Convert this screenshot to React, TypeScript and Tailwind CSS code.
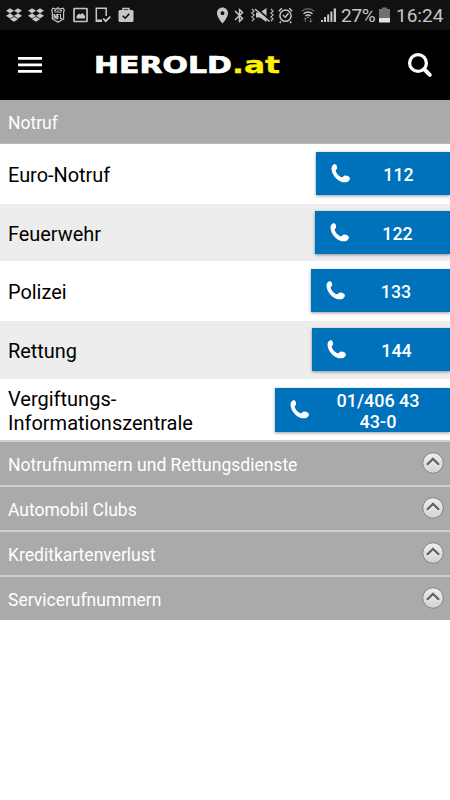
import { FaDropbox } from "react-icons/fa";
import { MdBluetooth, MdPlace } from "react-icons/md";

const numbers = [
  { label: "Euro-Notruf", phone: "112", row: "h-[60px] bg-white pb-px", button: "w-[134px]", text: "w-[65px]" },
  { label: "Feuerwehr", phone: "122", row: "h-[57px] bg-[#ededed]", button: "w-[135px]", text: "w-[65px]" },
  { label: "Polizei", phone: "133", row: "h-[60px] bg-white pb-px", button: "w-[139px]", text: "w-[70px]" },
  { label: "Rettung", phone: "144", row: "h-[58px] bg-[#ededed] pb-px", button: "w-[138px]", text: "w-[69px]" },
];

const sections = [
  "Notrufnummern und Rettungsdienste",
  "Automobil Clubs",
  "Kreditkartenverlust",
  "Servicerufnummern",
];

function StatusBar() {
  return (
    <div className="flex h-[30px] items-center justify-between bg-[#111] pl-[6px] pr-[6px] text-[#c6c6c6]">
      <div className="flex items-center">
        <FaDropbox className="h-4 w-4" />
        <FaDropbox className="ml-[6px] h-4 w-4" />
        {/* NFL */}
        <svg className="ml-[7px]" width="14" height="16" viewBox="0 0 14 16">
          <path d="M7 .7 9 2l3-.8L13.3 3l-.7 2v7L9 14l-2 1.3L5 14l-3.600-2V5L.7 3 2 1.200 5 2Z" fill="none" stroke="currentColor" strokeWidth="1.200" />
          <path d="M3 3.500h2M6 3h2M9 3.500h2M3.500 5h7" stroke="currentColor" />
          <path d="M3 12V7l2.200 5V7M6.500 12.500V7.500h1.800M6.500 10h1.500M9.500 7v4.500h1.800" fill="none" stroke="currentColor" strokeWidth="1.100" />
        </svg>
        {/* picture */}
        <svg className="ml-[8px]" width="15" height="16" viewBox="0 0 15 16">
          <rect x="1" y="1.500" width="13" height="13" rx="0.500" fill="none" stroke="currentColor" strokeWidth="1.700" />
          <path d="M3.500 11.500V9L6 6.500l1.500 1L9.500 6l2.500 3v2.500Z" fill="currentColor" />
        </svg>
        {/* device check */}
        <svg className="ml-[7px]" width="16" height="16" viewBox="0 0 16 16" fill="none" stroke="currentColor">
          <path d="M7 14.200H1.300V1.300h9.900V9" strokeWidth="1.500" />
          <path d="M1 13.500h6" strokeWidth="2" />
          <path d="m8.200 11.500 2.500 2.700 4.600-4.600" strokeWidth="1.800" />
        </svg>
        {/* work profile */}
        <svg className="ml-[7px]" width="16" height="16" viewBox="0 0 16 16">
          <path d="M5 4V1.500h6V4" fill="none" stroke="currentColor" strokeWidth="1.500" />
          <rect x=".5" y="3" width="15" height="12" rx="1.500" fill="currentColor" />
          <path d="m4.700 8.700 2.500 2.500 4-4.300" fill="none" stroke="#111" strokeWidth="1.600" />
        </svg>
      </div>

      <div className="flex items-center">
        <MdPlace className="h-[19px] w-[19px]" />
        <MdBluetooth className="-ml-[1px] h-[17px] w-[17px]" />
        {/* vibrate / muted */}
        <svg className="ml-[3px]" width="23" height="16" viewBox="0 0 23 16">
          <path d="M5 5.500h4l6.500-4.500v14L9 10.500H5Z" fill="currentColor" />
          <path d="m5 .5 15 14" stroke="#111" strokeWidth="1.800" />
          <path d="m4 2 14.500 12.500" stroke="currentColor" strokeWidth="1.300" />
          <path d="M1 2l2 2-2 2 2 2-2 2 2 2-2 2M20 2l2 2-2 2 2 2-2 2 2 2-2 2" fill="none" stroke="currentColor" strokeWidth="1.300" strokeDasharray="2 .5" />
        </svg>
        {/* alarm */}
        <svg className="ml-[4px]" width="15" height="17" viewBox="0 0 15 17" fill="none" stroke="currentColor">
          <circle cx="7.500" cy="8.700" r="5.600" strokeWidth="1.500" />
          <path d="m.8 4.200 3-2.900M14.200 4.200l-3-2.900M2.800 14.500l-1 1.500M12.200 14.500l1 1.500" strokeWidth="1.500" />
          <path d="m5 8 2.300 2.200 3.200-4" strokeWidth="1.400" />
        </svg>
        {/* wifi */}
        <svg className="ml-[8px] mr-[2px]" width="14" height="16" viewBox="0 0 14 16" fill="none" stroke="currentColor">
          <path d="M.7 4.200c3.500-3.300 9.100-3.300 12.600 0" strokeWidth="1.300" opacity=".45" />
          <path d="M2.500 6.700c2.500-2.400 6.500-2.400 9 0M4.500 9c1.300-1.400 3.700-1.400 5 0" strokeWidth="1.500" />
          <circle cx="7" cy="10.300" r=".8" fill="currentColor" stroke="none" />
          <path d="M4.300 15v-4M2.800 12.500l1.500-1.700 1.500 1.700M9.700 11v4M8.200 13.500l1.500 1.700 1.500-1.700" strokeWidth="1" opacity=".5" />
        </svg>
        {/* signal */}
        <svg className="ml-[4px]" width="16" height="16" viewBox="0 0 16 16" fill="currentColor">
          <path d="M0 15v-2h2v2ZM3 15v-5h2v5ZM6.200 15V7.500h2V15ZM9.400 15V4.500h2V15ZM12.700 15V1.500h2.300V15Z" />
        </svg>
        <span className="ml-[4px] w-[36px] pt-[2px] text-[19px] leading-[28px] tracking-[-0.3px]">27%</span>
        {/* battery */}
        <svg className="ml-[2px] mr-px" width="11" height="16" viewBox="0 0 11 16">
          <path d="M3 2V.5h5V2h3v9H0V2Z" fill="#707070" />
          <path d="M0 11h11v4.500H0Z" fill="#e2e2e2" />
        </svg>
        <span className="ml-[5px] w-[48px] pt-[2px] text-[19px] leading-[28px]">16:24</span>
      </div>
    </div>
  );
}

function Header() {
  return (
    <header className="flex h-[70px] items-center bg-black pl-[18px] pr-[17px]">
      <svg width="24" height="18" viewBox="0 0 24 18" fill="#fff">
        <path d="M0 1h24v2.700H0ZM0 7.500h24v2.700H0ZM0 14h24v2.700H0Z" />
      </svg>
      <svg className="ml-[52px]" width="190" height="30" viewBox="0 0 190 30" fontFamily="DejaVu Sans, sans-serif" fontWeight="bold">
        <text x="0" y="23" fontSize="23" fill="#fff" stroke="#fff" strokeWidth=".7" textLength="138" lengthAdjust="spacingAndGlyphs">HEROLD</text>
        <text x="138" y="23" fontSize="22.500" fill="#fff200" stroke="#fff200" strokeWidth=".3" textLength="48" lengthAdjust="spacingAndGlyphs">.at</text>
      </svg>
      <svg className="ml-auto" width="26" height="26" viewBox="0 0 26 26" fill="none" stroke="#fff">
        <circle cx="11" cy="11" r="8.400" strokeWidth="3.300" />
        <path d="m17.500 17.500 5.300 5.300" strokeWidth="4" strokeLinecap="round" />
      </svg>
    </header>
  );
}

function PhoneIcon() {
  return (
    <svg className="ml-[15px] shrink-0" width="19" height="19" viewBox="0 0 19 19" fill="#fff">
      <path d="M1.300 1.800C2.300.3 4-.2 5 .7c1 1 1.400 2.600 1 3.700C5.700 5.500 4.500 5.700 4.700 6.700c.5 2.600 3.200 5.800 6.200 6.600 1.200.3 1.400-1.300 2.800-1.700 1.800-.4 4 .5 4.900 1.800.8 1.300 0 3-1.500 4-3 1.900-7.600.8-11.400-2.500C1.900 11.500-.9 5.200 1.300 1.800Z" />
    </svg>
  );
}

function ArrowUp() {
  return (
    <svg width="22" height="22" viewBox="0 0 22 22">
      <defs>
        <linearGradient id="knob" x1="0" y1="0" x2="0" y2="1">
          <stop offset="0" stopColor="#eee" />
          <stop offset="1" stopColor="#d2d2d2" />
        </linearGradient>
      </defs>
      <circle cx="11" cy="11" r="10.300" fill="url(#knob)" stroke="#858585" strokeWidth="1" />
      <path d="m5.300 14.100 5.700-5.700 5.700 5.700" fill="none" stroke="#fff" strokeWidth="2" />
      <path d="m5 12.900 6-6 6 6" fill="none" stroke="#666" strokeWidth="2.400" />
    </svg>
  );
}

export default function App() {
  return (
    <div className="h-[800px] w-[450px] overflow-hidden bg-white font-[Roboto,sans-serif]">
      <StatusBar />
      <Header />

      <h2 className="h-[44px] border-b border-[#b8b8b8] bg-[#aaa] pl-2 pt-px text-[17.500px] leading-[45px] text-white">Notruf</h2>

      {numbers.map((n) => (
        <div key={n.label} className={`flex items-center justify-between pl-2 ${n.row}`}>
          <span className="pt-[4px] text-[19.900px] leading-6 text-black">{n.label}</span>
          <button className={`flex h-[43px] items-center bg-[#0072bc] shadow-[0_1px_3px_rgba(0,0,0,0.4)] ${n.button}`}>
            <PhoneIcon />
            <span className={`ml-[16px] pt-[3px] text-center text-[17.800px] font-medium text-white ${n.text}`}>{n.phone}</span>
          </button>
        </div>
      ))}

      <div className="flex h-[61px] items-center justify-between bg-white pl-2">
        <span className="pt-[3px] text-[20px] leading-6 text-black">
          Vergiftungs-
          <br />
          Informationszentrale
        </span>
        <button className="flex h-[44px] w-[175px] items-center bg-[#0072bc] shadow-[0_1px_3px_rgba(0,0,0,0.4)]">
          <PhoneIcon />
          <span className="ml-[16px] w-[106px] pt-[2px] text-center text-[18px] font-medium leading-[21px] text-white">
            01/406 43
            <br />
            43-0
          </span>
        </button>
      </div>

      {sections.map((title) => (
        <div key={title} className="flex h-[45px] items-center justify-between border-t-2 border-[#cfcfcf] bg-[#aaa] pl-2 pr-[6px]">
          <span className="pt-[3px] text-[17.500px] leading-6 text-white">{title}</span>
          <div className="pb-[2px]">
            <ArrowUp />
          </div>
        </div>
      ))}
    </div>
  );
}
